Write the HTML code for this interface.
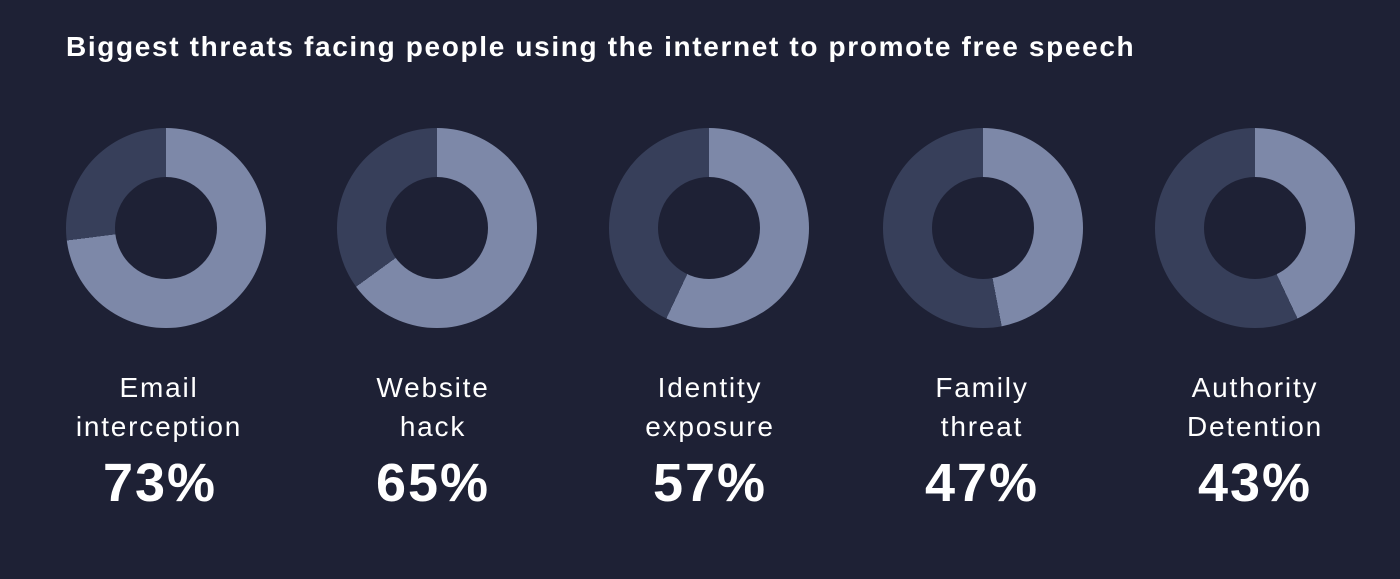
<!DOCTYPE html>
<html><head><meta charset="utf-8"><style>
html,body{margin:0;padding:0;}
body{width:1400px;height:579px;background:#1e2135;position:relative;overflow:hidden;font-family:"Liberation Sans",Arial,sans-serif;color:#fff;}
h1{position:absolute;left:66px;top:31px;margin:0;font-size:28px;font-weight:bold;letter-spacing:1.65px;white-space:nowrap;}
.d{position:absolute;top:128px;width:200px;height:200px;border-radius:50%;}
.d::after{content:"";position:absolute;left:49px;top:49px;width:102px;height:102px;border-radius:50%;background:#1e2135;}
.l{position:absolute;top:368px;width:260px;text-align:center;font-size:28px;line-height:39px;letter-spacing:1.8px;}
.p{position:absolute;top:452px;width:260px;text-align:center;font-size:54px;font-weight:bold;letter-spacing:2px;}
</style></head><body>
<h1>Biggest threats facing people using the internet to promote free speech</h1>
<div class="d" style="left:66px;background:conic-gradient(#7d88a8 0 73%,#373f5a 73% 100%)"></div>
<div class="d" style="left:337px;background:conic-gradient(#7d88a8 0 65%,#373f5a 65% 100%)"></div>
<div class="d" style="left:609px;background:conic-gradient(#7d88a8 0 57%,#373f5a 57% 100%)"></div>
<div class="d" style="left:883px;background:conic-gradient(#7d88a8 0 47%,#373f5a 47% 100%)"></div>
<div class="d" style="left:1155px;background:conic-gradient(#7d88a8 0 43%,#373f5a 43% 100%)"></div>
<div class="l" style="left:29px">Email<br>interception</div>
<div class="l" style="left:303px">Website<br>hack</div>
<div class="l" style="left:580px">Identity<br>exposure</div>
<div class="l" style="left:852px">Family<br>threat</div>
<div class="l" style="left:1125px">Authority<br>Detention</div>
<div class="p" style="left:30px">73%</div>
<div class="p" style="left:303px">65%</div>
<div class="p" style="left:580px">57%</div>
<div class="p" style="left:852px">47%</div>
<div class="p" style="left:1125px">43%</div>
</body></html>
